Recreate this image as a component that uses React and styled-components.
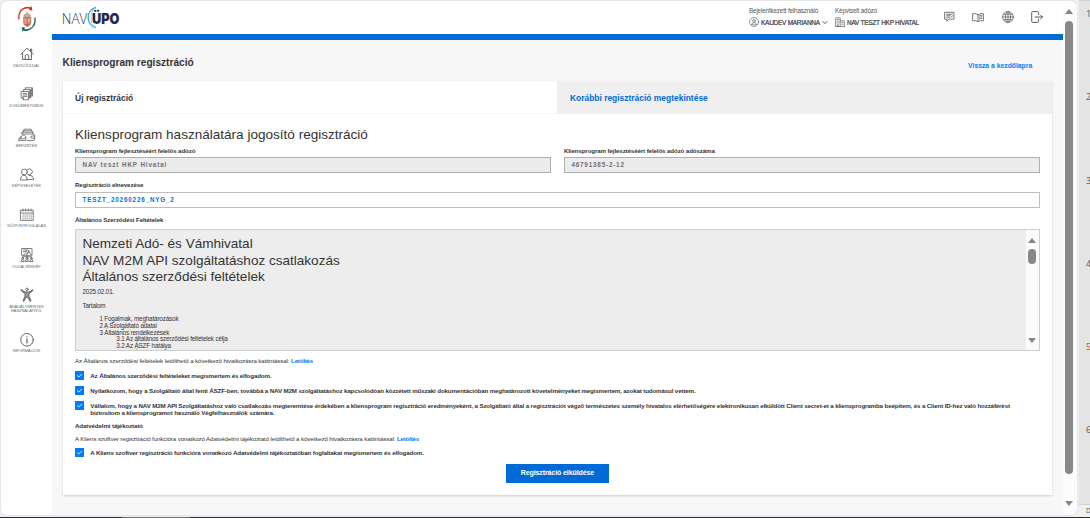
import React from "react";
import styled, { createGlobalStyle } from "styled-components";

const Global = createGlobalStyle`
  * { box-sizing: border-box; }
  body {
    margin: 0;
    overflow: hidden;
    background: #f0f0f1;
    font-family: "Liberation Sans", Arial, sans-serif;
    color: #333;
  }
  p, h1, h2, h3 { margin: 0; font-weight: 400; }
`;

const Desktop = styled.div`
  width: 1090px;
  height: 518px;
  display: grid;
  grid-template-columns: 1079px 11px;
  grid-template-rows: 517px 1px;
  overflow: hidden;
`;

const Window = styled.div`
  margin: 1px 2px 2px 1px;
  display: grid;
  grid-template-columns: 51px 1011px 14px;
  background: #f7f7f7;
  border-radius: 7px;
  overflow: hidden;
  box-shadow: 0 0 0 1px #e6e6e6;
`;

const Taskbar = styled.div`
  grid-column: 1 / 3;
  display: flex;
  background: #2b2b2f;
`;

const TaskHighlight = styled.div`
  width: 68px;
  margin-left: 122px;
  background: #707070;
`;

const Rail = styled.nav`
  background: #fff;
  display: flex;
  flex-direction: column;
  align-items: center;
  padding-top: 4px;
`;

const Crest = styled.div`
  height: 41.3px;
  svg { display: block; }
`;

const RailItem = styled.div`
  height: ${(p) => p.$h || 40.2}px;
  width: 51px;
  display: flex;
  flex-direction: column;
  align-items: center;
  svg { display: block; flex: none; }
`;

const RailLabel = styled.div`
  margin-top: 2.3px;
  font-size: 3.95px;
  line-height: 4px;
  text-align: center;
  white-space: nowrap;
  color: #666;
`;

const Main = styled.div`
  display: flex;
  flex-direction: column;
`;

const Header = styled.header`
  height: 39px;
  flex: none;
  display: flex;
  background: #fff;
  border-bottom: 6px solid #006bd6;
  padding-left: 9px;
`;

const Logo = styled.svg`
  display: block;
  overflow: visible;
  margin-top: 4px;
  margin-right: 628px;
`;

const UserBlock = styled.div`
  width: ${(p) => p.$w}px;
  padding-top: 6px;
  color: #555;
`;

const UserCaption = styled.div`
  font-size: 6.3px;
  line-height: 8px;
  letter-spacing: -0.16px;
  white-space: nowrap;
`;

const UserName = styled.div`
  display: flex;
  align-items: center;
  height: 14px;
  gap: 2px;
  font-size: 6.5px;
  letter-spacing: -0.27px;
  color: #333;
  -webkit-text-stroke: 0.2px #444;
  white-space: nowrap;
`;

const HeaderIcons = styled.div`
  display: flex;
  align-items: center;
  gap: 17.6px;
  height: 32px;
  svg { display: block; }
`;

const Content = styled.main`
  flex: 1;
  padding: 15px 10.8px 20px 10.6px;
  display: flex;
  flex-direction: column;
`;

const TitleRow = styled.div`
  display: flex;
  justify-content: space-between;
  height: 26px;
  padding-right: 20px;
`;

const PageTitle = styled.h1`
  font-size: 10.15px;
  line-height: 16px;
  font-weight: 700;
`;

const BackLink = styled.a`
  font-size: 6.8px;
  line-height: 8px;
  font-weight: 700;
  color: #0080ff;
  padding-top: 7px;
`;

const Card = styled.section`
  flex: 1;
  background: #fff;
  box-shadow: 0 1px 2px rgba(0, 0, 0, 0.16);
`;

const Tabs = styled.div`
  display: flex;
  height: 33px;
`;

const Tab = styled.div`
  flex: 1;
  padding-left: 12.5px;
  line-height: 34px;
  font-size: 8.45px;
  font-weight: 700;
  color: ${(p) => (p.$active ? "#333" : "#006bd6")};
  background: ${(p) => (p.$active ? "#fff" : "#efefef")};
  border-bottom: 1px solid ${(p) => (p.$active ? "#f7f7f7" : "#efefef")};
`;

const Form = styled.div`
  padding: 12px 12.4px 0 12.4px;
  display: flex;
  flex-direction: column;
`;

const Heading = styled.h2`
  font-size: 13.55px;
  line-height: 17px;
  height: 21px;
`;

const FieldRow = styled.div`
  display: grid;
  grid-template-columns: 1fr 1fr;
  gap: 13px;
`;

const Field = styled.div`
  display: flex;
  flex-direction: column;
  margin-bottom: ${(p) => p.$mb}px;
`;

const Label = styled.label`
  display: block;
  font-size: 6.15px;
  line-height: 7px;
  height: ${(p) => p.$h}px;
  font-weight: 700;
  letter-spacing: -0.1px;
`;

const Input = styled.div`
  height: 15.5px;
  padding-left: 6.5px;
  border: 1px solid ${(p) => (p.$disabled ? "#b0b0b0" : "#bdbdbd")};
  background: ${(p) => (p.$disabled ? "#ececec" : "#fff")};
  color: ${(p) => (p.$disabled ? "#707070" : "#0073dd")};
  font-size: 6.3px;
  line-height: 14px;
  font-weight: 700;
  letter-spacing: ${(p) => p.$ls}px;
`;

const Terms = styled.div`
  height: 121.5px;
  display: flex;
  justify-content: space-between;
  border: 1px solid #cdcdcd;
  background: #ededed;
  overflow: hidden;
`;

const TermsText = styled.div`
  padding: 6px 0 0 6.5px;
  font-size: 6.3px;
  line-height: 6.75px;
  letter-spacing: -0.15px;
`;

const TermsTitle = styled.h3`
  font-size: 13.55px;
  line-height: 16.4px;
  letter-spacing: 0;
  white-space: nowrap;
`;

const TermsPara = styled.p`
  margin-top: ${(p) => p.$mt}px;
`;

const TocItem = styled.p`
  padding-left: ${(p) => p.$level * 16.9}px;
  white-space: nowrap;
`;

const InnerScroll = styled.div`
  width: 13px;
  background: #fbfbfb;
  display: flex;
  flex-direction: column;
  align-items: center;
  justify-content: space-between;
  padding: 8px 0 7px;
`;

const Arrow = styled.i`
  display: block;
  flex: none;
  border: 4px solid transparent;
  border-top-width: ${(p) => (p.$up ? 0 : 5)}px;
  border-bottom-width: ${(p) => (p.$up ? 5 : 0)}px;
  border-top-color: ${(p) => (p.$up ? "transparent" : "#868686")};
  border-bottom-color: ${(p) => (p.$up ? "#868686" : "transparent")};
`;

const Thumb = styled.div`
  width: 8px;
  height: ${(p) => p.$h}px;
  margin-top: ${(p) => p.$mt}px;
  margin-bottom: auto;
  flex: none;
  border-radius: 4px;
  background: #888;
`;

const Note = styled.p`
  font-size: 6.15px;
  line-height: 7px;
  white-space: nowrap;
  margin-top: ${(p) => p.$mt}px;
  font-weight: ${(p) => (p.$bold ? 700 : 400)};
  letter-spacing: -0.1px;
`;

const Download = styled.a`
  font-weight: 700;
  letter-spacing: -0.2px;
  color: #0077e0;
`;

const Consents = styled.div`
  display: flex;
  flex-direction: column;
  padding-top: ${(p) => p.$pt}px;
`;

const Consent = styled.div`
  display: flex;
  align-items: flex-start;
  gap: 6.3px;
  height: ${(p) => p.$h}px;
`;

const ConsentText = styled.p`
  margin-top: 0.6px;
  font-size: 6.2px;
  line-height: 7px;
  font-weight: 700;
  letter-spacing: -0.14px;
  white-space: nowrap;
`;

const Box = styled.span`
  width: 9px;
  height: 9px;
  flex: none;
  background: #007dfa;
  svg { display: block; }
`;

const Submit = styled.button`
  align-self: center;
  margin-top: 6.8px;
  width: 103px;
  height: 19px;
  border: 0;
  padding: 0 0 1px;
  background: #006bd6;
  color: #fff;
  font: 700 7px "Liberation Sans", Arial, sans-serif;
  letter-spacing: -0.1px;
`;

const PageScroll = styled.div`
  background: #fcfcfc;
  display: flex;
  flex-direction: column;
  align-items: center;
  padding: 8px 2px 9px 0;
`;

const Ruler = styled.div`
  background: #e4e4e4;
  border-top: 1px solid #d0d0d0;
  padding: 7px 0 0 7px;
  overflow: hidden;
  display: flex;
  flex-direction: column;
`;

const Tick = styled.div`
  height: 83.3px;
  flex: none;
  font: 9px/12px "Open Sans", sans-serif;
  color: ${(p) => (p.$hot ? "#d8452e" : "#555")};
`;

const Footnote = styled.div`
  flex: none;
  height: 14px;
  margin: -4px 0 0 -7px;
  padding-left: 7px;
  border-top: 1px solid #d0d0d0;
  background: #f0f0f0;
  font: 6.5px/12px "Open Sans", sans-serif;
  color: #555;
`;

const Icon = ({ w = 16, h = 15, vb, sw = 0.8, c = "#555", children }) => (
  <svg width={w} height={h} viewBox={vb || `0 0 ${w} ${h}`} fill="none" stroke={c} strokeWidth={sw} strokeLinejoin="round" strokeLinecap="round">
    {children}
  </svg>
);

const HomeIcon = () => (
  <Icon sw={0.9}>
    <path d="M1.8 8.3 8 2.2l6.2 6.1M3.6 7.2v6.3h8.8V7.2M6.3 13.3V9.7q0-1 1-1h1.4q1 0 1 1v3.6M11.5 4.8V3h1.2v3" />
  </Icon>
);

const DocsIcon = () => (
  <Icon sw={0.75}>
    <path d="M2.5 5.5h7v8.3h-5l-2-2zM4.3 5.3V3.6h7.2v8.4h-1.8M6.2 3.4V1.8h7.3v8.4h-1.8M4 7.4h4M4 9h4M4 10.6h4M4.5 13.6v-1.9H2.7M10.6 4.5v6.8M12.5 2.8v6.5" />
  </Icon>
);

const WalletIcon = () => (
  <Icon w={18} sw={0.75}>
    <path d="M3.8 6.8V5.2h11v2M5 5l1.2-2.8h7L14.500 5M5.500 3.800h8M14.800 6.700q1.900.3 1.900 2v3.200q0 1.600-1.600 1.600H9.500M16.700 9h-2.800q-1.100 0-1.100 1.100t1.100 1.100h2.800M3.800 7h9.700" />
    <path d="M1.200 13.600h6.600V9.400L6 7.600l-3 2.100-1.800 1.700zM1.200 11.800h4l2.400-1M3 9.600v1.800" />
  </Icon>
);

const PeopleIcon = () => (
  <Icon>
    <circle cx="5.400" cy="5" r="2.900" />
    <path d="M8.300 2.800a2.900 2.900 0 1 1 .6 4.500" />
    <path d="M1.500 12.600c.1-2.900 1.400-4.300 3.300-4.300 2.100 0 3.300 1.500 3.400 4.300zM10 8.400c2.900-.4 4.400 1.300 4.500 4.200H8.300" />
  </Icon>
);

const CalendarIcon = () => (
  <Icon sw={0.75}>
    <path d="M1.800 3.200h12.400v10.200H1.800zM1.800 6h12.400M4 2v2M6.700 2v2M9.300 2v2M12 2v2" />
    <path d="M3.600 8h9.200M3.600 9.900h9.200M3.600 11.800h9.200" strokeDasharray=".9 1.15" strokeLinecap="butt" strokeWidth="1" />
  </Icon>
);

const SitemapIcon = () => (
  <Icon sw={0.75}>
    <path d="M3 1.500h10v6.800H3zM4.500 3h3M4.500 4.600h2M8 8.300v2M3.600 10.600v-.9h8.800v.9M4.600 8.100l2-2 1.300 1.200L10 5l2 2.400" />
    <circle cx="8.600" cy="4.200" r="1.300" />
    <circle cx="3.600" cy="11.300" r=".9" />
    <circle cx="8" cy="11.300" r=".9" />
    <circle cx="12.400" cy="11.300" r=".9" />
    <path d="M2 14.100q0-1.600 1.600-1.600t1.600 1.600zM6.400 14.100q0-1.600 1.600-1.600t1.600 1.600zM10.800 14.100q0-1.600 1.600-1.600t1.600 1.600z" />
  </Icon>
);

const AccessIcon = () => (
  <Icon sw={0.7} c="#444">
    <circle cx="8" cy="2.400" r="1.300" />
    <path d="M2.500 2.600q1.800 2 4 2.400h3q2.200-.4 4-2.400l.5.8q-1.900 2.400-4 2.900v2.800l2 4.900-.9.300L8.500 10h-1l-2.600 4.300-.9-.3 2-4.900V6.300q-2.200-.5-4-2.900z" fill="#9a9a9a" />
  </Icon>
);

const InfoIcon = () => (
  <Icon sw={0.9}>
    <circle cx="8" cy="7.800" r="6.300" />
    <path d="M8 6.700v4.300M8 4.600v.2" strokeWidth="1.100" />
  </Icon>
);

const railItems = [
  { icon: HomeIcon, label: ["KEZDŐOLDAL"] },
  { icon: DocsIcon, label: ["DOKUMENTUMOK"] },
  { icon: WalletIcon, label: ["BEFIZETÉS"] },
  { icon: PeopleIcon, label: ["KÉPVISELETEK"] },
  { icon: CalendarIcon, label: ["IDŐPONTFOGLALÁS"] },
  { icon: SitemapIcon, label: ["OLDALTÉRKÉP"] },
  { icon: AccessIcon, label: ["AKADÁLYMENTES", "HASZNÁLATRÓL"], h: 44.3 },
  { icon: InfoIcon, label: ["INFORMÁCIÓK"] },
];

const CrestIcon = () => (
  <svg width="20" height="28" viewBox="0 0 20 28" fill="none">
    <path d="M2 14.500C.8 7 5.500 2 12 2.600" stroke="#dc2a1c" strokeWidth="1.300" />
    <path d="M5.500 3.600Q9.500.8 13.200 2.200L14.400 1l1.100 4.400-3.700-.3.900-1.200Q9.500 2.400 5.500 3.600z" fill="#dc2a1c" />
    <path d="M17.900 12.500C19 19 15.500 24.500 9 25" stroke="#14614c" strokeWidth="1.300" />
    <path d="M14.500 23.600Q10.500 27 6.700 25.400L5.600 26.700 4.600 22.300l3.700.3-1 1.300q3 1.500 7.200-.3z" fill="#14614c" />
    <path d="M6.500 12h7.400v6q0 2.300-3.700 3.700-3.700-1.400-3.700-3.700z" fill="#d2604c" stroke="#b09a78" strokeWidth=".6" />
    <path d="M7 14h3M7 16h3M7.200 18h2.800" stroke="#f3e6dc" strokeWidth=".8" />
    <path d="M11.900 13v6M10.900 14.500h2M10.700 16h2.400" stroke="#f6efe6" strokeWidth=".6" />
    <path d="M7 11.300q-.4-2.300 3.200-2.500 3.600.2 3.200 2.500zM10.200 8.800V7.200M9.500 7.800h1.400" fill="#d9b98a" stroke="#a07c5a" strokeWidth=".6" />
  </svg>
);

const Check = () => (
  <Box>
    <svg width="9" height="9" viewBox="0 0 9 9" fill="none" stroke="#fff" strokeWidth=".9">
      <path d="M2.200 4.500l1.600 1.500 3-3" />
    </svg>
  </Box>
);

export default function App() {
  return (
    <Desktop>
      <Global />
      <Window>
        <Rail>
          <Crest><CrestIcon /></Crest>
          {railItems.map(({ icon: Glyph, label, h }) => (
            <RailItem key={label[0]} $h={h}>
              <Glyph />
              <RailLabel>{label.map((l) => <div key={l}>{l}</div>)}</RailLabel>
            </RailItem>
          ))}
        </Rail>
        <Main>
          <Header>
            <Logo width="60" height="26" viewBox="0 0 60 26">
              <text x="0.800" y="18.700" fontFamily="Open Sans" fontWeight="300" fontSize="14.500" fill="#2f3b5c" textLength="25.500" lengthAdjust="spacingAndGlyphs">NAV</text>
              <path d="M35 2.500C24.500 5 24.500 20 35 22.600" fill="none" stroke="#35a8e0" strokeWidth="1.400" />
              <path d="M34 2.800C29 6 28.500 18.500 34 22.300" fill="none" stroke="#7cc8ec" strokeWidth=".8" />
              <text x="31" y="18.700" fontFamily="Inter" fontWeight="900" fontSize="14.300" fill="#1e2a4d" textLength="27.500" lengthAdjust="spacingAndGlyphs">ÜPO</text>
            </Logo>
            <UserBlock $w={86}>
              <UserCaption>Bejelentkezett felhasználó</UserCaption>
              <UserName>
                <Icon w={10} h={10} sw={0.6}>
                  <circle cx="5" cy="5" r="4.500" />
                  <circle cx="5" cy="3.900" r="1.400" />
                  <path d="M2.600 7.400q.2-1.800 2.400-1.800t2.400 1.800z" />
                </Icon>
                KAUDEV MARIANNA
                <Icon w={6} h={5} sw={0.9}><path d="M.8 1.500l2.200 2 2.200-2" /></Icon>
              </UserName>
            </UserBlock>
            <UserBlock $w={108.5}>
              <UserCaption>Képviselt adózó</UserCaption>
              <UserName>
                <Icon w={10} h={10} sw={0.65}>
                  <path d="M.6 9.500V.8h4.600v8.700M5.200 3.800h4.200v5.700M.3 9.500h9.400M2 2.500h.6M3.500 2.500h.5M2 4.200h.6M3.500 4.200h.5M2 5.900h.6M3.500 5.900h.5M6.700 5.500h1.400M6.700 7.200h1.400M2.400 9.300V7.700h1v1.600" />
                </Icon>
                NAV TESZT HKP HIVATAL
              </UserName>
            </UserBlock>
            <HeaderIcons>
              <Icon w={11} h={12} sw={0.8}>
                <path d="M1 1.300h9v6.800H5L2.800 10.200V8.100H1zM2.700 3.300h5.600M2.700 4.800h3.600M2.700 6.300h2.600" />
                <path d="M7 6.400l1.700-1.700" />
              </Icon>
              <Icon w={12} h={12} sw={0.8}>
                <path d="M6 3.600Q4.300 2.300.6 2.700v7q3.700-.3 5.400.9 1.700-1.200 5.400-.9v-7Q7.700 2.300 6 3.600v6.600M7.500 4.600q1-.4 2.300-.3M7.500 6.200q1-.4 2.300-.3M7.500 7.800q1-.4 2.300-.3" />
              </Icon>
              <Icon w={12} h={12} sw={0.7}>
                <circle cx="6" cy="6" r="5.400" />
                <ellipse cx="6" cy="6" rx="2.500" ry="5.400" />
                <path d="M.6 6h10.800M6 .6v10.800M1.500 3.300h9M1.500 8.700h9" />
              </Icon>
              <Icon w={12} h={12} sw={0.95}>
                <path d="M7.500 3.500V1.600q0-1-1-1H1.700q-1 0-1 1v8.800q0 1 1 1h4.800q1 0 1-1V8.500M4 6h7.500M9.600 4.100L11.500 6 9.600 7.900" />
              </Icon>
            </HeaderIcons>
          </Header>
          <Content>
            <TitleRow>
              <PageTitle>Kliensprogram regisztráció</PageTitle>
              <BackLink>Vissza a kezdőlapra</BackLink>
            </TitleRow>
            <Card>
              <Tabs>
                <Tab $active>Új regisztráció</Tab>
                <Tab>Korábbi regisztráció megtekintése</Tab>
              </Tabs>
              <Form>
                <Heading>Kliensprogram használatára jogosító regisztráció</Heading>
                <FieldRow>
                  <Field $mb={8.5}>
                    <Label $h={10}>Kliensprogram fejlesztéséért felelős adózó</Label>
                    <Input $disabled $ls={0.88}>NAV teszt HKP Hivatal</Input>
                  </Field>
                  <Field $mb={8.5}>
                    <Label $h={10}>Kliensprogram fejlesztéséért felelős adózó adószáma</Label>
                    <Input $disabled $ls={0.82}>46791385-2-12</Input>
                  </Field>
                </FieldRow>
                <Field $mb={8}>
                  <Label $h={11}>Regisztráció elnevezése</Label>
                  <Input $ls={0.83}>TESZT_20260226_NYG_2</Input>
                </Field>
                <Label $h={13.8}>Általános Szerződési Feltételek</Label>
                <Terms>
                  <TermsText>
                    <TermsTitle>Nemzeti Adó- és Vámhivatal</TermsTitle>
                    <TermsTitle>NAV M2M API szolgáltatáshoz csatlakozás</TermsTitle>
                    <TermsTitle>Általános szerződési feltételek</TermsTitle>
                    <TermsPara $mt={3.5}>2025.02.01.</TermsPara>
                    <TermsPara $mt={6.8}>Tartalom</TermsPara>
                    <TermsPara as="div" $mt={6.8}>
                      <TocItem $level={1}>1 Fogalmak, meghatározások</TocItem>
                      <TocItem $level={1}>2 A Szolgáltató adatai</TocItem>
                      <TocItem $level={1}>3 Általános rendelkezések</TocItem>
                      <TocItem $level={2}>3.1 Az általános szerződési feltételek célja</TocItem>
                      <TocItem $level={2}>3.2 Az ÁSZF hatálya</TocItem>
                      <TocItem $level={2}>3.3 Az ÁSZF módosítása</TocItem>
                    </TermsPara>
                  </TermsText>
                  <InnerScroll>
                    <Arrow $up />
                    <Thumb $h={15} $mt={6} />
                    <Arrow />
                  </InnerScroll>
                </Terms>
                <Note $mt={6.7}>
                  Az Általános szerződési feltételek letölthető a következő hivatkozásra kattintással: <Download>Letöltés</Download>
                </Note>
                <Consents $pt={6.5}>
                  <Consent $h={15.2}><Check /><ConsentText>Az Általános szerződési feltételeket megismertem és elfogadom.</ConsentText></Consent>
                  <Consent $h={15.2}><Check /><ConsentText>Nyilatkozom, hogy a Szolgáltató által fenti ÁSZF-ben, továbbá a NAV M2M szolgáltatáshoz kapcsolódóan közzétett műszaki dokumentációban meghatározott követelményeket megismertem, azokat tudomásul vettem.</ConsentText></Consent>
                  <Consent $h={20.4}><Check /><ConsentText>Vállalom, hogy a NAV M2M API Szolgáltatáshoz való csatlakozás megteremtése érdekében a kliensprogram regisztráció eredményeként, a Szolgáltató által a regisztrációt végző természetes személy hivatalos elérhetőségére elektronikusan elküldött Client secret-et a kliensprogramba beépítem, és a Client ID-hez való hozzáférést<br />biztosítom a kliensprogramot használó Végfelhasználók számára.</ConsentText></Consent>
                </Consents>
                <Note $mt={0} $bold>Adatvédelmi tájékoztató</Note>
                <Note $mt={6.5}>
                  A Kliens szoftver regisztráció funkcióra vonatkozó Adatvédelmi tájékoztató letölthető a következő hivatkozásra kattintással: <Download>Letöltés</Download>
                </Note>
                <Consents $pt={5.8}>
                  <Consent $h={9}><Check /><ConsentText>A Kliens szoftver regisztráció funkcióra vonatkozó Adatvédelmi tájékoztatóban foglaltakat megismertem és elfogadom.</ConsentText></Consent>
                </Consents>
                <Submit>Regisztráció elküldése</Submit>
              </Form>
            </Card>
          </Content>
        </Main>
        <PageScroll>
          <Arrow $up />
          <Thumb $h={453} $mt={7} />
          <Arrow />
        </PageScroll>
      </Window>
      <Ruler>
        <Tick>1</Tick>
        <Tick>2</Tick>
        <Tick>3</Tick>
        <Tick>4</Tick>
        <Tick $hot>5</Tick>
        <Tick>6</Tick>
        <Footnote>D</Footnote>
      </Ruler>
      <Taskbar><TaskHighlight /></Taskbar>
    </Desktop>
  );
}
